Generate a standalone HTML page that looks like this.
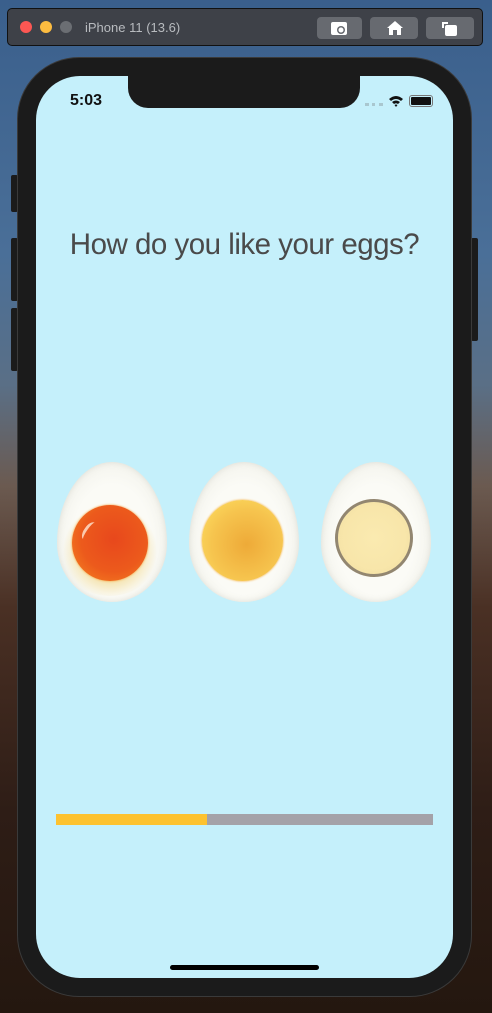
<!DOCTYPE html>
<html><head><style>
*{margin:0;padding:0;box-sizing:border-box}
body{width:492px;height:1013px;overflow:hidden;position:relative;font-family:"Liberation Sans",sans-serif;
background:linear-gradient(180deg,#3a5f8c 0%,#4a6f98 25%,#5a6f86 38%,#6b5a50 48%,#4a3024 60%,#2e1d16 80%,#24170f 100%)}
.abs{position:absolute}
.bar{left:7px;top:8px;width:476px;height:38px;background:#3e4148;border:1px solid #111;border-radius:5px}
.dot{top:21px;width:12px;height:12px;border-radius:50%}
.btn{top:17px;width:45px;height:22px;background:#676a70;border-radius:4px}
.phone{left:17px;top:57px;width:455px;height:940px;background:#1b1b1b;border-radius:62px;border:1px solid #3a3a3a}
.screen{left:36px;top:76px;width:417px;height:902px;background:#c5f0fb;border-radius:44px;overflow:hidden}
.side{background:#1b1b1b;border-radius:2px}
.egg{width:110px;height:140px;border-radius:50% 50% 50% 50%/58% 58% 42% 42%;background:radial-gradient(ellipse at 50% 55%,#fbfbf6 50%,#f1f1ea 80%,#e8eae2 100%);box-shadow:inset 0 0 6px rgba(200,200,190,.5)}
.yolk{border-radius:50%}
</style></head><body>
<div class="abs bar"></div>
<div class="abs dot" style="left:20px;background:#fc5753"></div>
<div class="abs dot" style="left:40px;background:#fdbc40"></div>
<div class="abs dot" style="left:60px;background:#6b6e73"></div>
<div class="abs" style="left:85px;top:20px;font-size:13px;color:#b8bbbf">iPhone 11 (13.6)</div>
<div class="abs btn" style="left:317px"></div>
<div class="abs btn" style="left:370px;width:48px"></div>
<div class="abs btn" style="left:426px;width:48px"></div>
<svg class="abs" style="left:330px;top:19px" width="20" height="18"><rect x="1" y="3" width="16" height="13" rx="2" fill="#fff"/><circle cx="11" cy="11" r="4" fill="#676a70"/><circle cx="11" cy="11" r="2.5" fill="#fff"/></svg>
<svg class="abs" style="left:385px;top:19px" width="20" height="18"><path d="M2 9 L10 2 L18 9 L16 9 L16 16 L4 16 L4 9Z" fill="#fff"/><rect x="8" y="11" width="4" height="5" fill="#676a70"/></svg>
<svg class="abs" style="left:440px;top:19px" width="20" height="18"><rect x="5" y="6" width="12" height="11" rx="2" fill="#fff"/><path d="M3 9 V4 H8" stroke="#fff" stroke-width="2" fill="none"/></svg>

<div class="abs side" style="left:11px;top:175px;width:7px;height:37px"></div>
<div class="abs side" style="left:11px;top:238px;width:7px;height:63px"></div>
<div class="abs side" style="left:11px;top:308px;width:7px;height:63px"></div>
<div class="abs side" style="left:471px;top:238px;width:7px;height:103px"></div>
<div class="abs phone"></div>
<div class="abs screen">
  <div class="abs" style="left:92px;top:0;width:232px;height:32px;background:#1b1b1b;border-radius:0 0 20px 20px"></div>
  <div class="abs" style="left:34px;top:16px;font-size:16px;font-weight:bold;color:#111">5:03</div>
  <div class="abs" style="left:329px;top:27px;width:18px;height:3px;border-top:3px dotted #a9c7cf"></div>
  <svg class="abs" style="left:352px;top:18px" width="16" height="13"><path d="M1 5 Q8 -1 15 5 L13 7 Q8 3 3 7Z M4 8 Q8 5 12 8 L10 10 Q8 8.5 6 10Z M8 13 L6.5 11 Q8 10 9.5 11Z" fill="#111"/></svg>
  <div class="abs" style="left:373px;top:19px;width:24px;height:12px;border:1px solid #777;border-radius:3px;padding:1px"><div style="width:100%;height:100%;background:#111;border-radius:1px"></div></div>
  <div class="abs" style="left:0;top:152px;width:417px;text-align:center;font-size:29.5px;letter-spacing:-0.5px;color:#4a4a4a">How do you like your eggs?</div>

  <div class="abs egg" style="left:21px;top:386px"></div>
  <div class="abs" style="left:24px;top:430px;width:100px;height:90px;border-radius:50%;background:radial-gradient(circle,rgba(235,195,80,.5) 40%,rgba(240,210,120,0) 70%)"></div>
  <div class="abs yolk" style="left:36px;top:429px;width:76px;height:76px;background:radial-gradient(circle at 55% 45%,#e8481c 0%,#ec5a1c 55%,#f47e20 90%,#f7a030 100%);box-shadow:0 0 2px #f59a2c"></div>
  <div class="abs" style="left:48px;top:445px;width:10px;height:20px;border-left:3px solid rgba(255,230,210,.8);border-radius:50%;transform:rotate(35deg)"></div>

  <div class="abs egg" style="left:153px;top:386px"></div>
  <div class="abs yolk" style="left:166px;top:424px;width:81px;height:81px;background:radial-gradient(circle at 55% 55%,#eeaa38 0%,#f6c44e 55%,#fbd55a 80%,#f6a828 100%);box-shadow:0 0 2px #f4a020"></div>

  <div class="abs egg" style="left:285px;top:386px"></div>
  <div class="abs yolk" style="left:299px;top:423px;width:78px;height:78px;border:3px solid #928670;background:radial-gradient(circle,#faeab0 0%,#f8e6aa 60%,#eedca0 100%)"></div>

  <div class="abs" style="left:20px;top:738px;width:377px;height:11px;background:#a4a2a8"></div>
  <div class="abs" style="left:20px;top:738px;width:151px;height:11px;background:#fdc22f"></div>
  <div class="abs" style="left:134px;top:889px;width:149px;height:5px;background:#000;border-radius:3px"></div>
</div>
</body></html>
